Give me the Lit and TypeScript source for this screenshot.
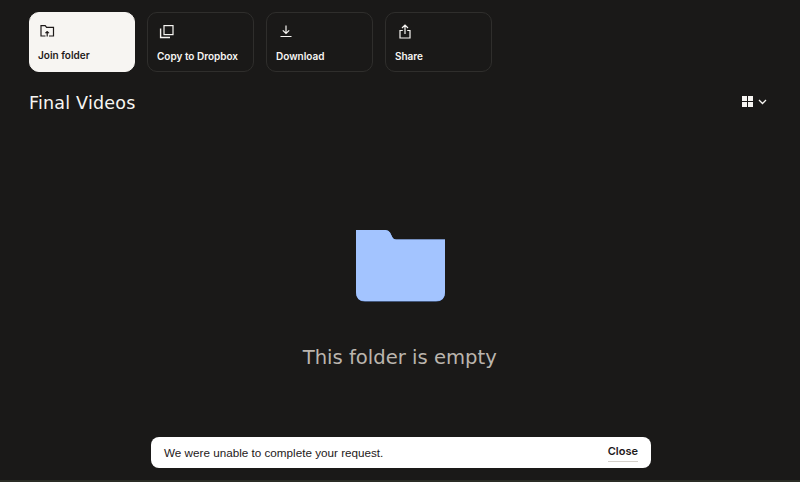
import { LitElement, html, css } from "lit";
import { customElement } from "lit/decorators.js";

@customElement("app-root")
export class AppRoot extends LitElement {
  static styles = css`
    :host { display: block; width: 800px; height: 482px; background: #1a1918; position: relative; overflow: hidden; font-family: "Inter", "Liberation Sans", sans-serif; }
    .page { display: flex; flex-direction: column; height: 480px; padding: 12px 29px 0 28.5px; box-sizing: border-box; }
    .actions { display: flex; gap: 12.33px; }
    .card { width: 106.67px; height: 60px; box-sizing: border-box; border: 1px solid #2f2e2c; border-radius: 10px; padding: 9px 8.5px 0; color: #f7f5f2; font-size: 10px; font-weight: 600; display: flex; flex-direction: column; gap: 9px; }
    .card.primary { background: #f7f5f2; border-color: #f7f5f2; color: #1e1919; gap: 8px; }
    .card svg { width: 18px; height: 18px; display: block; }
    .card span { line-height: 14px; white-space: nowrap; }
    .head { display: flex; justify-content: space-between; align-items: center; margin-top: 18px; height: 24px; padding-left: 0.5px; }
    h1 { margin: 0; font: 400 17.5px "DejaVu Sans", sans-serif; color: #f7f5f2; letter-spacing: 0.2px; position: relative; top: 1px; }
    .view { display: flex; align-items: center; gap: 5px; margin-right: 4px; }
    .grid { margin-top: -2px; }
    .empty { display: flex; flex-direction: column; align-items: center; margin-top: 115px; }
    .folder { margin-left: 2px; display: block; }
    .empty p { margin: 44px 0 0; font: 400 19.6px "DejaVu Sans", sans-serif; color: #bbb5ae; line-height: 24px; }
    .toast { position: absolute; left: 151px; top: 437px; width: 500px; height: 31px; background: #fff; border-radius: 8px; display: flex; justify-content: space-between; align-items: center; padding: 0 13px; box-sizing: border-box; font-size: 12px; color: #1e1919; }
    .msg { font: 400 11.7px "Liberation Sans", sans-serif; margin-top: -1px; }
    .close { font-weight: 600; font-size: 11px; line-height: 16px; border-bottom: 1px solid #d4d0ca; padding-bottom: 2px; }
    .edge { position: absolute; left: 0; right: 0; top: 480px; height: 2px; background: #2a2c25; }
  `;

  render() {
    return html`
      <div class="page">
        <div class="actions">
          <div class="card primary">
            <svg viewBox="0 0 18 18" fill="none" stroke="currentColor" stroke-width="1.2"><path d="M7.500 14H3V3.600h4.200l1.400 1.800H15.500V14H11"/><path d="M9.200 14.500V10"/><path d="M7.300 11 9.200 9l1.900 2z" fill="currentColor" stroke-width=".6"/></svg>
            <span>Join folder</span>
          </div>
          <div class="card">
            <svg viewBox="0 0 18 18" fill="none" stroke="currentColor" stroke-width="1.2"><rect x="7" y="3.600" width="9" height="9"/><path d="M3.600 6.500v9h9.400" stroke-width="1.400"/></svg>
            <span>Copy to Dropbox</span>
          </div>
          <div class="card">
            <svg viewBox="0 0 18 18" fill="none" stroke="currentColor" stroke-width="1.2"><path d="M10 3.500v8M6.800 8.300 10 11.500l3.200-3.200M4.500 14.500h11"/></svg>
            <span>Download</span>
          </div>
          <div class="card">
            <svg viewBox="0 0 18 18" fill="none" stroke="currentColor" stroke-width="1.2"><path d="M10 12V3.500M7 6 10 3l3 3M7.800 8.500H5v7.500h10V8.500h-2.800"/></svg>
            <span>Share</span>
          </div>
        </div>
        <div class="head">
          <h1>Final Videos</h1>
          <div class="view">
            <svg class="grid" width="11" height="11" viewBox="0 0 11 11" fill="#f7f5f2"><rect width="5" height="5"/><rect x="6" width="5" height="5"/><rect y="6" width="5" height="5"/><rect x="6" y="6" width="5" height="5"/></svg>
            <svg width="9" height="6" viewBox="0 0 9 6" fill="none" stroke="#f7f5f2" stroke-width="1.3"><path d="M1 1l3.500 3.500L8 1"/></svg>
          </div>
        </div>
        <div class="empty">
          <svg class="folder" width="89" height="73" viewBox="0 0 89 73">
            <path d="M0 1h29.500q3 0 4.500 2.500l2.500 5q1 2 3.500 2H89V63q0 9.500-9 9.500H9q-9 0-9-9.500z" fill="#6f98e0"/>
            <path d="M0 1h29.500q3 0 4.500 2.500l2.500 5q1 2 3.500 2H89V63q0 9-9 9H9q-9 0-9-9z" fill="#a3c4ff"/>
          </svg>
          <p>This folder is empty</p>
        </div>
      </div>
      <div class="toast"><span class="msg">We were unable to complete your request.</span><span class="close">Close</span></div>
      <div class="edge"></div>
    `;
  }
}
